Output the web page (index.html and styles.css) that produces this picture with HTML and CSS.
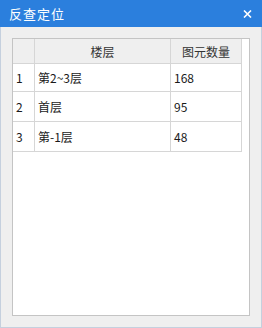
FILE: index.html
```html
<!DOCTYPE html>
<html lang="zh-CN">
<head>
    <meta charset="UTF-8">
    <title>反查定位</title>
    <link rel="stylesheet" href="styles.css">
</head>
<body>
    <div class="window">
        <div class="title-bar">
            <span class="title">反查定位</span>
            <span class="close">
                <svg width="9" height="8" viewBox="0 0 9 8">
                    <path d="M1 0.5 L8 7.5 M8 0.5 L1 7.5" stroke="#fff" stroke-width="1.6" fill="none"/>
                </svg>
            </span>
        </div>
        <div class="content">
            <div class="grid-frame">
                <div class="grid">
                    <div class="cell head"></div>
                    <div class="cell head center">楼层</div>
                    <div class="cell head center">图元数量</div>

                    <div class="cell">1</div>
                    <div class="cell">第2~3层</div>
                    <div class="cell">168</div>

                    <div class="cell">2</div>
                    <div class="cell">首层</div>
                    <div class="cell">95</div>

                    <div class="cell">3</div>
                    <div class="cell">第-1层</div>
                    <div class="cell">48</div>
                </div>
            </div>
        </div>
    </div>
</body>
</html>
```

FILE: styles.css
```css
* {
    margin: 0;
    padding: 0;
    box-sizing: border-box;
}

body {
    width: 262px;
    height: 328px;
    font-family: "Noto Sans CJK SC", "Noto Sans", sans-serif;
    font-size: 12px;
    color: #1a1a1a;
}

.window {
    width: 262px;
    height: 328px;
    display: flex;
    flex-direction: column;
}

.title-bar {
    height: 27px;
    background-color: #2b7fdd;
    color: #fff;
    display: flex;
    align-items: center;
    justify-content: space-between;
    padding: 0 10px 0 9px;
}

.title {
    font-size: 13px;
    letter-spacing: 1px;
}

.close {
    display: flex;
    align-items: center;
}

.content {
    flex: 1;
    background-color: #efefef;
    border: 1px solid #c5d0de;
    border-top: none;
    padding: 11px;
    display: flex;
}

.grid-frame {
    flex: 1;
    background-color: #fff;
    border: 1px solid #c4c4c4;
}

.grid {
    display: grid;
    grid-template-columns: 22px 136px 71px;
    grid-template-rows: 25px 28px 30px 30px;
}

.cell {
    border-right: 1px solid #d6d6d6;
    border-bottom: 1px solid #d6d6d6;
    display: flex;
    align-items: center;
    padding-left: 3px;
    white-space: nowrap;
}

.head {
    background-color: #efefef;
    color: #333;
}

.center {
    justify-content: center;
    padding-left: 0;
}
```
